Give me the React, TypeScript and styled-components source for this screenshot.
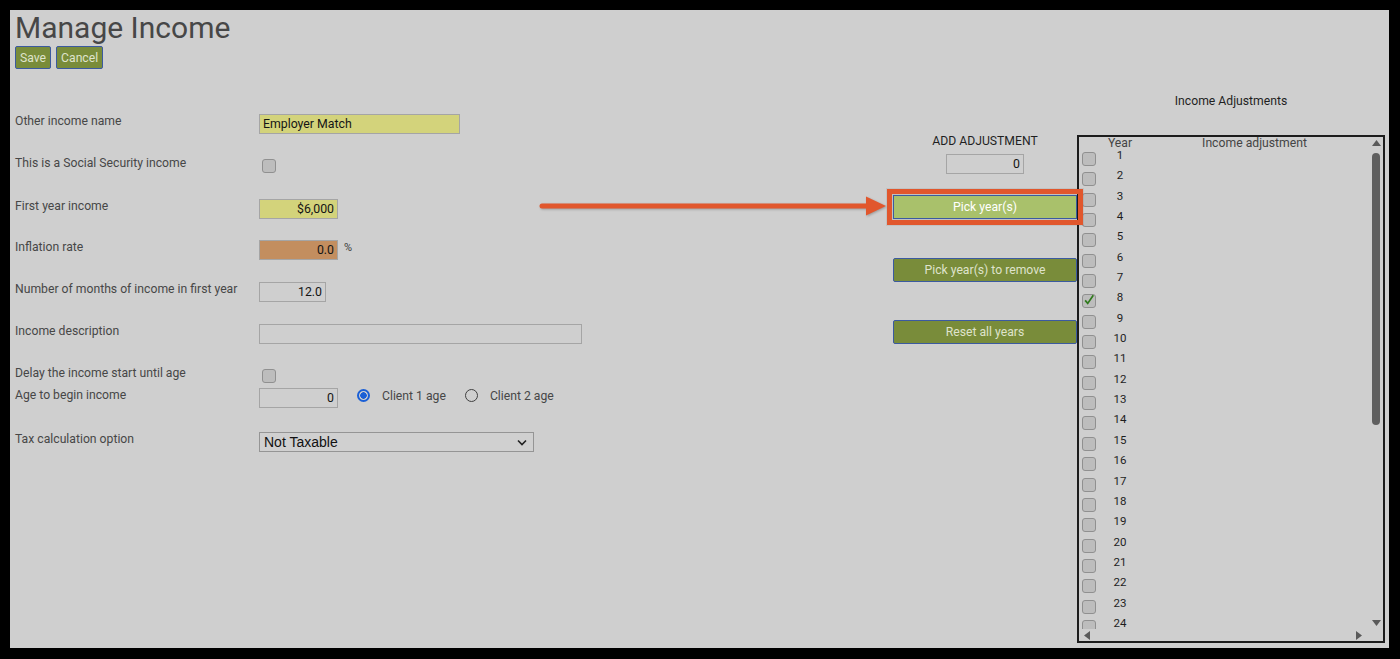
import React from "react";
import styled, { createGlobalStyle } from "styled-components";

const GlobalStyle = createGlobalStyle`
	html, body {
		margin: 0;
		background: #000;
	}
	body {
		font-family: Roboto, "Liberation Sans", sans-serif;
	}
	* {
		box-sizing: border-box;
	}
`;

const Frame = styled.div`
	position: relative;
	margin: 10px 11px 0 10px;
	width: 1379px;
	height: 638px;
	padding: 0 4px 5px 5px;
	background: #cfcfcf;
	overflow: hidden;
`;

const Title = styled.h1`
	margin: 0;
	height: 36px;
	font-size: 30px;
	line-height: 36px;
	font-weight: 400;
	color: #474747;
`;

const ButtonBar = styled.div`
	display: flex;
	gap: 5px;
	height: 23px;
`;

const ActionButton = styled.button<{ $light?: boolean; $wide?: boolean; $highlight?: boolean }>`
	position: relative;
	z-index: ${(p) => (p.$highlight ? 2 : "auto")};
	height: ${(p) => (p.$wide ? "24px" : "23px")};
	width: ${(p) => (p.$wide ? "184px" : "auto")};
	padding: 0 4px;
	border: 1px solid #3b5aa0;
	border-radius: ${(p) => (p.$highlight ? 0 : 2)}px;
	background: ${(p) => (p.$light ? "#a9c16b" : "#798c3a")};
	color: ${(p) => (p.$light ? "#ffffff" : "#dfe3cc")};
	font-family: Roboto, "Liberation Sans", sans-serif;
	font-size: 12.2px;
	line-height: 20px;
	cursor: pointer;
	outline: ${(p) => (p.$highlight ? "5px solid #e1572d" : "none")};
	outline-offset: 1px;
	box-shadow: ${(p) => (p.$highlight ? "0 0 0 7px rgba(0,0,0,0.06)" : "none")};
`;

const Body = styled.div`
	display: flex;
	align-items: flex-start;
`;

const FormColumn = styled.div`
	width: 878px;
	padding-top: 45px;
`;

const Row = styled.div<{ $gap: number }>`
	display: grid;
	grid-template-columns: 244px 1fr;
	align-items: center;
	height: 20px;
	margin-top: ${(p) => p.$gap}px;
`;

const Label = styled.div`
	font-size: 12.2px;
	line-height: 15px;
	padding-bottom: 5px;
	color: #474747;
	white-space: nowrap;
`;

const Controls = styled.div`
	display: flex;
	align-items: center;
	height: 20px;
`;

const Field = styled.div<{ $w: number; $bg?: string; $right?: boolean }>`
	width: ${(p) => p.$w}px;
	height: 20px;
	padding: 0 3px;
	border: 1px solid #a5a5a5;
	background: ${(p) => p.$bg ?? "#cfcfcf"};
	color: #151515;
	font-size: 12.3px;
	line-height: 18px;
	text-align: ${(p) => (p.$right ? "right" : "left")};
	white-space: nowrap;
`;

const Box = styled.span<{ $offset?: number }>`
	display: inline-flex;
	align-items: center;
	justify-content: center;
	width: 14px;
	height: 14px;
	margin-left: ${(p) => p.$offset ?? 0}px;
	border: 1px solid #909090;
	border-radius: 3px;
	background: #bdbdbd;
	flex: none;
`;

const Percent = styled.span`
	margin-left: 6px;
	margin-bottom: 6px;
	font-size: 11px;
	color: #3a3a3a;
`;

const RadioDot = styled.span<{ $on?: boolean }>`
	display: inline-block;
	width: 13px;
	height: 13px;
	margin-left: 19px;
	margin-bottom: 5px;
	border-radius: 50%;
	border: ${(p) => (p.$on ? "2px solid #1a5fd6" : "1.5px solid #404040")};
	background: ${(p) => (p.$on ? "radial-gradient(circle, #1a5fd6 0 3px, #cfcfcf 3.5px)" : "transparent")};
	flex: none;
`;

const RadioText = styled.span`
	margin-left: 12px;
	margin-bottom: 5px;
	font-size: 12.2px;
	color: #474747;
`;

const SelectBox = styled.div`
	display: flex;
	align-items: center;
	justify-content: space-between;
	width: 275px;
	height: 20px;
	padding: 0 6px 0 4px;
	border: 1px solid #959595;
	background: #d0d0d0;
	font-family: "Liberation Sans", Arial, sans-serif;
	font-size: 14px;
	color: #111;
`;

const MiddleColumn = styled.div`
	display: flex;
	flex-direction: column;
	align-items: center;
	width: 184px;
	padding-top: 65px;
`;

const SmallHeading = styled.div<{ $top?: number }>`
	margin-top: ${(p) => p.$top ?? 0}px;
	font-size: 12.2px;
	line-height: 14px;
	color: #1f1f1f;
	text-align: center;
`;

const AdjustInput = styled(Field)`
	margin-top: 6px;
	margin-bottom: 21px;
`;

const Spacer = styled.div<{ $h: number }>`
	height: ${(p) => p.$h}px;
	flex: none;
`;

const RightColumn = styled.div`
	display: flex;
	flex-direction: column;
	width: 308px;
`;

const Panel = styled.div`
	display: flex;
	flex-direction: column;
	margin-top: 27px;
	height: 508px;
	border: 2px solid #1c1c1c;
	background: #cfcfcf;
`;

const PanelBody = styled.div`
	display: flex;
	flex: 1;
	min-height: 0;
`;

const List = styled.div`
	flex: 1;
	overflow: hidden;
`;

const HeaderRow = styled.div`
	display: grid;
	grid-template-columns: 21px 40px 1fr;
	height: 12px;
	font-size: 12.2px;
	line-height: 12px;
	color: #454545;
	text-align: center;
`;

const YearRow = styled.div`
	display: grid;
	grid-template-columns: 21px 40px 1fr;
	align-items: start;
	height: 20.35px;
	font-size: 11.5px;
	line-height: 11px;
	color: #1e1e1e;
	text-align: center;
`;

const YearNum = styled.span`
	padding-top: 1px;
`;

const BoxCell = styled.div`
	padding: 3px 0 0 3px;
	display: flex;
`;

const VScroll = styled.div`
	display: flex;
	flex-direction: column;
	align-items: center;
	width: 14px;
`;

const ArrowCell = styled.div`
	display: flex;
	align-items: center;
	justify-content: center;
	height: 12px;
	flex: none;
`;

const Track = styled.div`
	flex: 1;
	padding-top: 4px;
	padding-bottom: 8px;
`;

const Thumb = styled.div`
	width: 8px;
	height: 272px;
	border-radius: 4px;
	background: #5f5f5f;
`;

const HScroll = styled.div`
	display: flex;
	align-items: center;
	justify-content: space-between;
	height: 12px;
	padding: 0 21px 0 5px;
`;

const ArrowOverlay = styled.svg`
	position: absolute;
	left: 528px;
	top: 186px;
	filter: drop-shadow(1px 1px 1px rgba(0, 0, 0, 0.25));
`;

const Tri = ({ dir }: { dir: "up" | "down" | "left" | "right" }) => {
	const pts = {
		up: "0,6 4.5,0 9,6",
		down: "0,0 9,0 4.5,6",
		left: "6,0 6,9 0,4.5",
		right: "0,0 0,9 6,4.5",
	}[dir];
	const vertical = dir === "up" || dir === "down";
	return (
		<svg width={vertical ? 9 : 6} height={vertical ? 6 : 9}>
			<polygon points={pts} fill="#5a5a5a" />
		</svg>
	);
};

const CheckMark = () => (
	<svg width="14" height="14" viewBox="0 0 14 14" style={{ position: "relative", top: -1 }}>
		<path d="M2.5 7.5 L5.5 11 L12 1.5" stroke="#2f7a1c" strokeWidth="2" fill="none" />
	</svg>
);

const Chevron = () => (
	<svg width="10" height="7" viewBox="0 0 10 7">
		<path d="M1 1.5 L5 5.5 L9 1.5" stroke="#222" strokeWidth="1.6" fill="none" />
	</svg>
);

const years = Array.from({ length: 24 }, (_, i) => i + 1);

export default function App() {
	return (
		<>
			<GlobalStyle />
			<Frame>
				<Title>Manage Income</Title>
				<ButtonBar>
					<ActionButton>Save</ActionButton>
					<ActionButton>Cancel</ActionButton>
				</ButtonBar>

				<Body>
					<FormColumn>
						<Row $gap={0}>
							<Label>Other income name</Label>
							<Controls>
								<Field $w={201} $bg="#d3d37b">Employer Match</Field>
							</Controls>
						</Row>
						<Row $gap={22}>
							<Label>This is a Social Security income</Label>
							<Controls>
								<Box $offset={3} />
							</Controls>
						</Row>
						<Row $gap={23}>
							<Label>First year income</Label>
							<Controls>
								<Field $w={79} $bg="#d3d37b" $right>$6,000</Field>
							</Controls>
						</Row>
						<Row $gap={21}>
							<Label>Inflation rate</Label>
							<Controls>
								<Field $w={79} $bg="#c38e5f" $right>0.0</Field>
								<Percent>%</Percent>
							</Controls>
						</Row>
						<Row $gap={22}>
							<Label>Number of months of income in first year</Label>
							<Controls>
								<Field $w={67} $right>12.0</Field>
							</Controls>
						</Row>
						<Row $gap={22}>
							<Label>Income description</Label>
							<Controls>
								<Field $w={323} />
							</Controls>
						</Row>
						<Row $gap={22}>
							<Label>Delay the income start until age</Label>
							<Controls>
								<Box $offset={3} />
							</Controls>
						</Row>
						<Row $gap={2}>
							<Label>Age to begin income</Label>
							<Controls>
								<Field $w={79} $right>0</Field>
								<RadioDot $on />
								<RadioText>Client 1 age</RadioText>
								<RadioDot />
								<RadioText>Client 2 age</RadioText>
							</Controls>
						</Row>
						<Row $gap={24}>
							<Label>Tax calculation option</Label>
							<Controls>
								<SelectBox>
									<span>Not Taxable</span>
									<Chevron />
								</SelectBox>
							</Controls>
						</Row>
					</FormColumn>

					<MiddleColumn>
						<SmallHeading>ADD ADJUSTMENT</SmallHeading>
						<AdjustInput $w={78} $right>0</AdjustInput>
						<ActionButton $wide $light $highlight>Pick year(s)</ActionButton>
						<Spacer $h={39} />
						<ActionButton $wide>Pick year(s) to remove</ActionButton>
						<Spacer $h={38} />
						<ActionButton $wide>Reset all years</ActionButton>
					</MiddleColumn>

					<RightColumn>
						<SmallHeading $top={25}>Income Adjustments</SmallHeading>
						<Panel>
							<PanelBody>
								<List>
									<HeaderRow>
										<span />
										<span>Year</span>
										<span>Income adjustment</span>
									</HeaderRow>
									{years.map((y) => (
										<YearRow key={y}>
											<BoxCell>
												<Box>{y === 8 && <CheckMark />}</Box>
											</BoxCell>
											<YearNum>{y}</YearNum>
											<span />
										</YearRow>
									))}
								</List>
								<VScroll>
									<ArrowCell>
										<Tri dir="up" />
									</ArrowCell>
									<Track>
										<Thumb />
									</Track>
									<ArrowCell>
										<Tri dir="down" />
									</ArrowCell>
								</VScroll>
							</PanelBody>
							<HScroll>
								<Tri dir="left" />
								<Tri dir="right" />
							</HScroll>
						</Panel>
					</RightColumn>
				</Body>

				<ArrowOverlay width="352" height="22" viewBox="0 0 352 22">
					<line x1="4" y1="10" x2="332" y2="10" stroke="#e1572d" strokeWidth="5" strokeLinecap="round" />
					<polygon points="328,0.5 348,10 328,19.5" fill="#e1572d" />
				</ArrowOverlay>
			</Frame>
		</>
	);
}
